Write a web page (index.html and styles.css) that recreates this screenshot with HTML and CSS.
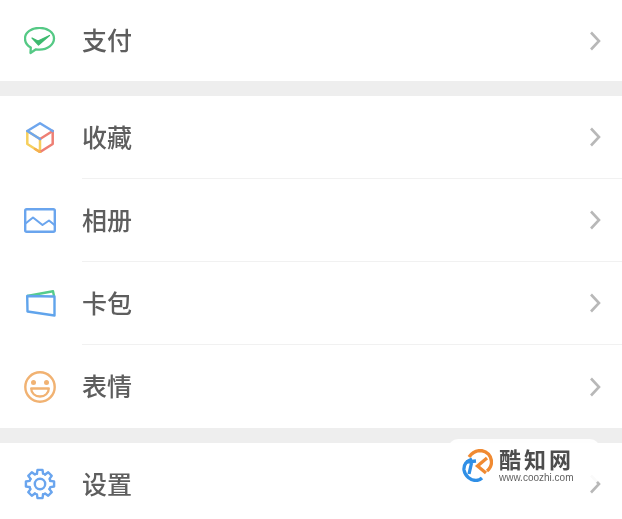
FILE: index.html
```html
<!DOCTYPE html>
<html lang="zh">
<head>
<meta charset="utf-8">
<title>我</title>
<link rel="stylesheet" href="styles.css">
</head>
<body>
<svg class="defs" width="0" height="0" aria-hidden="true">
  <defs>
    <path id="chevron" d="M2 1.500L10 10l-8 8.500" fill="none" stroke="#b8b8b8" stroke-width="2.600"/>
    <path id="tooth" d="M10.300 -3.100L14.100 -2.500L14.100 2.500L10.300 3.100A10.800 10.800 0 0 1 9.500 5.200" fill="none"/>
  </defs>
</svg>
<main class="screen">
  <section class="group group-first">
    <div class="row">
      <span class="icon"><svg viewBox="0 0 32 28" width="32" height="28" fill="none"><path d="M12 22.300C13.400 22.500 14.400 22.600 15.500 22.600C23.500 22.600 30 17.600 30 11.500C30 5.400 23.500 .9 15.500 .9C7.500 .9 1 5.400 1 11.500C1 15.200 3.300 18.500 6.800 20.500L6.500 26Z" stroke="#55c985" stroke-width="2.300" stroke-linejoin="round"/><path d="M8 11L14 14L25.500 8.500L14.500 18Z" fill="#3dba6e" stroke="#3dba6e" stroke-width="1.200" stroke-linejoin="round"/></svg></span>
      <div class="body"><span class="label">支付</span><svg class="chev" viewBox="0 0 12 20" width="12" height="20"><use href="#chevron"/></svg></div>
    </div>
  </section>
  <section class="group">
    <div class="row">
      <span class="icon icon-cube"><svg viewBox="0 0 28 31" width="28" height="31" fill="none" stroke-width="2.500" stroke-linejoin="round" stroke-linecap="round"><path d="M1.300 9L14 17V30L1.300 22Z" stroke="#f6cf5c"/><path d="M26.700 9V22L14 30" stroke="#ee7f74"/><path d="M14 17L26.700 9" stroke="#ee7f74"/><path d="M14 30L9 27" stroke="#f5b04e"/><path d="M14 17L1.300 9L14 1.300L26.700 9" stroke="#6ea6ee"/></svg></span>
      <div class="body body-line"><span class="label">收藏</span><svg class="chev" viewBox="0 0 12 20" width="12" height="20"><use href="#chevron"/></svg></div>
    </div>
    <div class="row">
      <span class="icon"><svg viewBox="0 0 32 25" width="32" height="25" fill="none"><rect x="1.200" y="1.200" width="29.600" height="22.600" rx="1.500" stroke="#6aa5ee" stroke-width="2.400"/><path d="M1.500 15.500L9 9.500L18.500 17L25 12.500L30.500 17" stroke="#6aa5ee" stroke-width="2.100" stroke-linejoin="round"/></svg></span>
      <div class="body body-line"><span class="label">相册</span><svg class="chev" viewBox="0 0 12 20" width="12" height="20"><use href="#chevron"/></svg></div>
    </div>
    <div class="row">
      <span class="icon icon-card"><svg viewBox="0 0 30 27" width="30" height="27" fill="none" stroke-width="2.400" stroke-linejoin="round"><path d="M1.200 6L27 1.200L28 6" stroke="#55cc8c"/><path d="M1.200 6L28.500 6.500V25.500L1.500 21.500Z" stroke="#60a4ec"/></svg></span>
      <div class="body body-line"><span class="label">卡包</span><svg class="chev" viewBox="0 0 12 20" width="12" height="20"><use href="#chevron"/></svg></div>
    </div>
    <div class="row">
      <span class="icon"><svg viewBox="0 0 32 32" width="32" height="32" fill="none"><circle cx="16" cy="16" r="14.700" stroke="#f1b272" stroke-width="2.400"/><circle cx="9.500" cy="11.500" r="2.500" fill="#f1b272"/><circle cx="22.500" cy="11.500" r="2.500" fill="#f1b272"/><path d="M7.200 17.500H24.800C24.800 22.200 21 25.500 16 25.500S7.200 22.200 7.200 17.500Z" stroke="#f1b272" stroke-width="2.300" stroke-linejoin="round"/></svg></span>
      <div class="body"><span class="label">表情</span><svg class="chev" viewBox="0 0 12 20" width="12" height="20"><use href="#chevron"/></svg></div>
    </div>
  </section>
  <section class="group">
    <div class="row row-last">
      <span class="icon"><svg viewBox="0 0 32 32" width="32" height="32" fill="none" stroke="#6aa5ee" stroke-width="2.400" stroke-linejoin="round" stroke-linecap="round"><g transform="translate(16 16)"><use href="#tooth"/><use href="#tooth" transform="rotate(45)"/><use href="#tooth" transform="rotate(90)"/><use href="#tooth" transform="rotate(135)"/><use href="#tooth" transform="rotate(180)"/><use href="#tooth" transform="rotate(225)"/><use href="#tooth" transform="rotate(270)"/><use href="#tooth" transform="rotate(315)"/></g><circle cx="16" cy="16" r="5.200"/></svg></span>
      <div class="body"><span class="label">设置</span><svg class="chev" viewBox="0 0 12 20" width="12" height="20"><use href="#chevron"/></svg></div>
    </div>
  </section>
</main>
<aside class="mark">
  <svg class="mark-logo" viewBox="0 0 32 33" width="32" height="33" fill="none" stroke-width="3.300"><path d="M8 8C11 3.500 15.500 1.500 20 1.500C26 2 30.500 7 30.500 13C30.500 17 28.500 20 26 22" stroke="#f08a32"/><path d="M11 10C5.500 12 2.500 16 3 21C4 27 9.500 31.500 15 31.500C17.500 31.500 19.500 30.500 21 29" stroke="#2f8fe6"/><path d="M5 13L15 12M11 12L8 25" stroke="#2f8fe6"/><path d="M26 9L16.500 17L25 24" stroke="#f08a32"/></svg>
  <div class="mark-text">
    <span class="mark-name">酷知网</span>
    <span class="mark-url">www.coozhi.com</span>
  </div>
</aside>
</body>
</html>
```

FILE: styles.css
```css
html, body {
  margin: 0;
  padding: 0;
  height: 100%;
  overflow: hidden;
  background: #fff;
}
body {
  position: relative;
  font-family: "Noto Sans CJK SC", "Noto Sans", sans-serif;
}
.defs { position: absolute; }
.screen {
  display: flex;
  flex-direction: column;
  gap: 15px;
  background: #eeeeee;
  height: 519px;
  overflow: hidden;
  filter: blur(0.5px);
}
.group {
  background: #fff;
  display: flex;
  flex-direction: column;
}
.group-first .row { height: 81px; }
.row {
  display: flex;
  align-items: stretch;
  height: 83px;
  flex: none;
}
.row-last { height: 82px; }
.icon {
  width: 82px;
  padding-left: 24px;
  box-sizing: border-box;
  display: flex;
  align-items: center;
  flex: none;
}
.icon-cube, .icon-card { padding-left: 26px; }
.body {
  flex: 1;
  display: flex;
  align-items: center;
  justify-content: space-between;
  padding-right: 21px;
}
.body-line { border-bottom: 1px solid #f1f1f1; }
.label {
  font-size: 25px;
  font-weight: 500;
  color: #5e5e5e;
  line-height: 1;
  margin-bottom: 2px;
}
.chev { flex: none; }
svg { display: block; }
.mark {
  position: absolute;
  left: 448px;
  top: 439px;
  width: 152px;
  height: 46px;
  box-sizing: border-box;
  padding: 8px 0 0 13px;
  display: flex;
  gap: 6px;
  background: rgba(255, 255, 255, .92);
  border-radius: 10px;
  filter: blur(0.4px);
}
.mark-logo { flex: none; margin-top: 2px; }
.mark-text {
  display: flex;
  flex-direction: column;
  gap: 4px;
}
.mark-name {
  font-size: 22px;
  line-height: 22px;
  letter-spacing: 3px;
  font-weight: 700;
  color: #4d4d4d;
}
.mark-url {
  font-family: "Liberation Sans", sans-serif;
  font-size: 10px;
  line-height: 10px;
  color: #5f5f5f;
}
```
